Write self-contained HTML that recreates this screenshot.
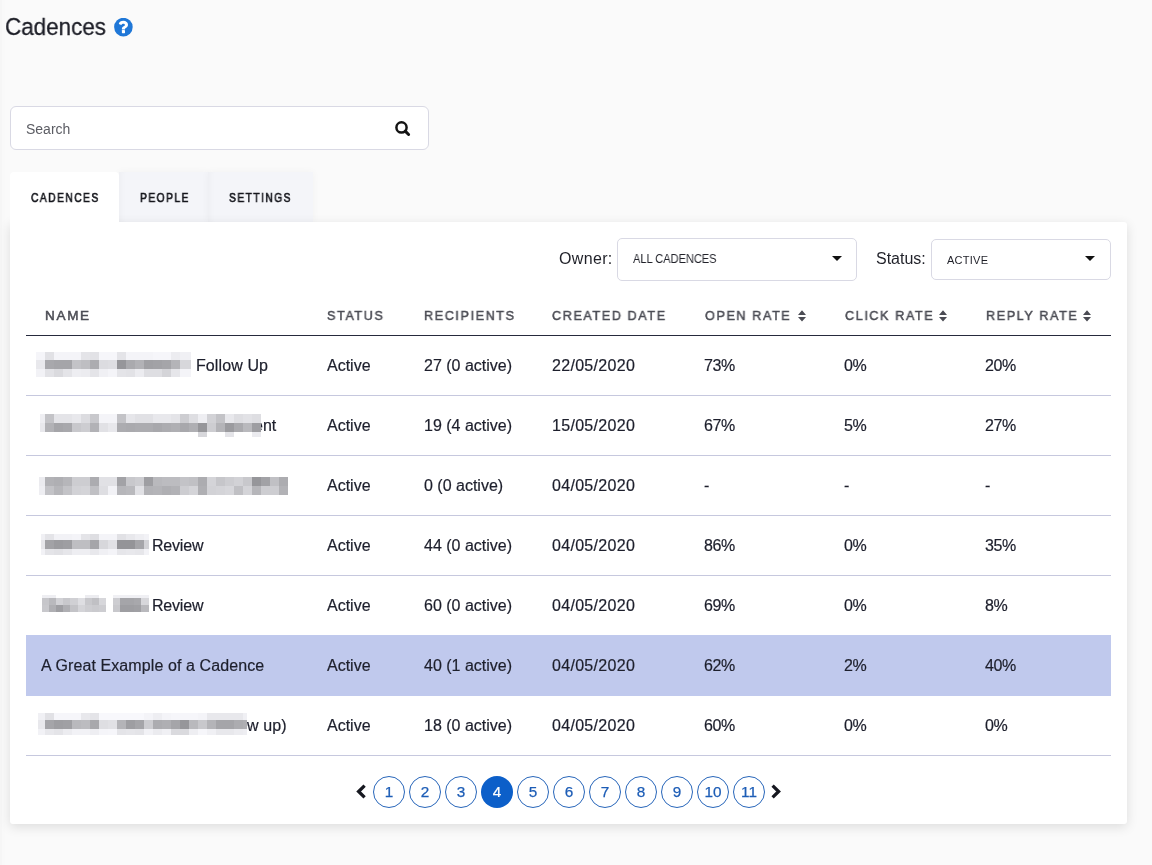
<!DOCTYPE html>
<html><head><meta charset="utf-8"><style>
html,body{margin:0;padding:0}
body{width:1152px;height:865px;background:#fafafa;position:relative;overflow:hidden;font-family:"Liberation Sans",sans-serif}
.t{position:absolute;white-space:nowrap;will-change:transform}
</style></head><body>
<div style="position:absolute;left:0px;top:0px;width:2px;height:865px;background:#f6f6f6"></div>
<div style="position:absolute;left:2px;top:0px;width:3px;height:865px;background:#f9f9f9"></div>
<div class="t" style="left:5px;top:12.83px;font-size:24.5px;line-height:27.37px;color:#1c1d26;font-weight:normal;letter-spacing:0px;transform:scaleX(0.915);transform-origin:0 0;-webkit-text-stroke:0.3px #1c1d26">Cadences</div>
<svg style="position:absolute;left:114px;top:18px" width="19" height="19" viewBox="0 0 19 19"><circle cx="9.4" cy="9.1" r="9.3" fill="#1f77d7"/><path d="M4.8 6.0 C5.2 3.9 7.0 2.8 9.4 2.8 C12.0 2.8 14.0 4.5 14.0 6.7 C14.0 8.5 12.9 9.3 11.9 9.9 C11.2 10.3 11.0 10.6 11.0 11.1 L11.0 11.6 L7.9 11.6 L7.9 10.9 C7.9 9.6 8.6 8.9 9.7 8.3 C10.5 7.8 10.9 7.5 10.9 6.9 C10.9 6.2 10.2 5.7 9.4 5.7 C8.5 5.7 7.8 6.2 7.3 7.0 Z" fill="#fff"/><rect x="7.9" y="12.1" width="3.1" height="3.1" rx="0.4" fill="#fff"/></svg>
<div style="position:absolute;left:10px;top:106px;width:419px;height:44px;box-sizing:border-box;border:1px solid #d9d9e4;border-radius:6px;background:#fff"></div>
<div class="t" style="left:26px;top:122.33px;font-size:14px;line-height:15.64px;color:#5b5c63;font-weight:normal;letter-spacing:0px;">Search</div>
<svg style="position:absolute;left:392px;top:118px" width="22" height="22" viewBox="0 0 22 22"><circle cx="9.5" cy="9.4" r="5.1" fill="none" stroke="#141414" stroke-width="2.5"/><line x1="13.2" y1="13.1" x2="16.6" y2="16.5" stroke="#141414" stroke-width="3" stroke-linecap="round"/></svg>
<div style="position:absolute;left:119px;top:172px;width:89px;height:50px;background:#f4f5f9;box-shadow:0 0 8px rgba(0,0,0,0.04), inset 6px 0 6px -4px rgba(0,0,0,0.03)"></div>
<div style="position:absolute;left:208px;top:172px;width:105px;height:50px;background:#f4f5f9;box-shadow:0 0 8px rgba(0,0,0,0.04), inset 6px 0 6px -4px rgba(0,0,0,0.03)"></div>
<div style="position:absolute;left:10px;top:222px;width:1117px;height:602px;background:#fff;border-radius:0 3px 3px 3px;box-shadow:0 3px 12px rgba(0,0,0,0.12)"></div>
<div style="position:absolute;left:10px;top:172px;width:109px;height:52px;background:#fff;border-radius:4px 4px 0 0"></div>
<div class="t" style="left:30.5px;top:192.34px;font-size:12px;line-height:13.40px;color:#15161c;font-weight:normal;letter-spacing:1.65px;transform:scaleX(0.86);transform-origin:0 0;-webkit-text-stroke:0.6px #15161c">CADENCES</div>
<div class="t" style="left:139.5px;top:192.34px;font-size:12px;line-height:13.40px;color:#15161c;font-weight:normal;letter-spacing:1.65px;transform:scaleX(0.86);transform-origin:0 0;-webkit-text-stroke:0.6px #15161c">PEOPLE</div>
<div class="t" style="left:229px;top:192.34px;font-size:12px;line-height:13.40px;color:#15161c;font-weight:normal;letter-spacing:1.65px;transform:scaleX(0.86);transform-origin:0 0;-webkit-text-stroke:0.6px #15161c">SETTINGS</div>
<div class="t" style="left:558.5px;top:249.82px;font-size:16px;line-height:17.87px;color:#1f2028;font-weight:normal;letter-spacing:0.35px;">Owner:</div>
<div style="position:absolute;left:617px;top:238px;width:240px;height:43px;box-sizing:border-box;border:1px solid #d9d9e4;border-radius:5px;background:#fff"></div>
<div class="t" style="left:632.5px;top:253.28px;font-size:12.4px;line-height:13.85px;color:#1f2028;font-weight:normal;letter-spacing:0px;transform:scaleX(0.89);transform-origin:0 0;">ALL CADENCES</div>
<svg style="position:absolute;left:832px;top:256px" width="10" height="5" viewBox="0 0 10 5"><path d="M0 0 H10 L5 5 Z" fill="#111"/></svg>
<div class="t" style="left:876px;top:249.82px;font-size:16px;line-height:17.87px;color:#1f2028;font-weight:normal;letter-spacing:0px;">Status:</div>
<div style="position:absolute;left:931px;top:239px;width:180px;height:41px;box-sizing:border-box;border:1px solid #d9d9e4;border-radius:5px;background:#fff"></div>
<div class="t" style="left:947px;top:254.04px;font-size:11px;line-height:12.29px;color:#1f2028;font-weight:normal;letter-spacing:0.25px;">ACTIVE</div>
<svg style="position:absolute;left:1085px;top:256px" width="10" height="5" viewBox="0 0 10 5"><path d="M0 0 H10 L5 5 Z" fill="#111"/></svg>
<div class="t" style="left:44.5px;top:308.38px;font-size:13.5px;line-height:15.08px;color:#4b4c54;font-weight:normal;letter-spacing:1.7px;transform:scaleX(0.99);transform-origin:0 0;-webkit-text-stroke:0.5px #4b4c54">NAME</div>
<div class="t" style="left:327px;top:308.38px;font-size:13.5px;line-height:15.08px;color:#4b4c54;font-weight:normal;letter-spacing:1.7px;transform:scaleX(0.935);transform-origin:0 0;-webkit-text-stroke:0.5px #4b4c54">STATUS</div>
<div class="t" style="left:423.5px;top:308.38px;font-size:13.5px;line-height:15.08px;color:#4b4c54;font-weight:normal;letter-spacing:1.7px;transform:scaleX(0.935);transform-origin:0 0;-webkit-text-stroke:0.5px #4b4c54">RECIPIENTS</div>
<div class="t" style="left:551.5px;top:308.38px;font-size:13.5px;line-height:15.08px;color:#4b4c54;font-weight:normal;letter-spacing:1.7px;transform:scaleX(0.935);transform-origin:0 0;-webkit-text-stroke:0.5px #4b4c54">CREATED DATE</div>
<div class="t" style="left:704.5px;top:308.38px;font-size:13.5px;line-height:15.08px;color:#4b4c54;font-weight:normal;letter-spacing:1.7px;transform:scaleX(0.935);transform-origin:0 0;-webkit-text-stroke:0.5px #4b4c54">OPEN RATE</div>
<div class="t" style="left:845px;top:308.38px;font-size:13.5px;line-height:15.08px;color:#4b4c54;font-weight:normal;letter-spacing:1.7px;transform:scaleX(0.935);transform-origin:0 0;-webkit-text-stroke:0.5px #4b4c54">CLICK RATE</div>
<div class="t" style="left:985.5px;top:308.38px;font-size:13.5px;line-height:15.08px;color:#4b4c54;font-weight:normal;letter-spacing:1.7px;transform:scaleX(0.935);transform-origin:0 0;-webkit-text-stroke:0.5px #4b4c54">REPLY RATE</div>
<svg style="position:absolute;left:798px;top:310px" width="8" height="12" viewBox="0 0 8 12"><path d="M0 5 L4 0.3 L8 5 Z M0 7 L8 7 L4 11.5 Z" fill="#4b4c54"/></svg>
<svg style="position:absolute;left:939.3px;top:310px" width="8" height="12" viewBox="0 0 8 12"><path d="M0 5 L4 0.3 L8 5 Z M0 7 L8 7 L4 11.5 Z" fill="#4b4c54"/></svg>
<svg style="position:absolute;left:1082.7px;top:310px" width="8" height="12" viewBox="0 0 8 12"><path d="M0 5 L4 0.3 L8 5 Z M0 7 L8 7 L4 11.5 Z" fill="#4b4c54"/></svg>
<div style="position:absolute;left:26px;top:335px;width:1085px;height:1px;background:#262a3d"></div>
<div class="t" style="left:195.7px;top:356.52px;font-size:16px;line-height:17.87px;color:#1d1f2c;font-weight:normal;letter-spacing:0.1px;-webkit-text-stroke:0.2px #1d1f2c">Follow Up</div>
<div class="t" style="left:327px;top:356.52px;font-size:16px;line-height:17.87px;color:#1d1f2c;font-weight:normal;letter-spacing:0px;-webkit-text-stroke:0.2px #1d1f2c">Active</div>
<div class="t" style="left:423.5px;top:356.52px;font-size:16px;line-height:17.87px;color:#1d1f2c;font-weight:normal;letter-spacing:0px;-webkit-text-stroke:0.2px #1d1f2c">27 (0 active)</div>
<div class="t" style="left:551.5px;top:356.52px;font-size:16px;line-height:17.87px;color:#1d1f2c;font-weight:normal;letter-spacing:0.3px;-webkit-text-stroke:0.2px #1d1f2c">22/05/2020</div>
<div class="t" style="left:703.7px;top:356.52px;font-size:16px;line-height:17.87px;color:#1d1f2c;font-weight:normal;letter-spacing:-0.4px;-webkit-text-stroke:0.2px #1d1f2c">73%</div>
<div class="t" style="left:844px;top:356.52px;font-size:16px;line-height:17.87px;color:#1d1f2c;font-weight:normal;letter-spacing:-0.4px;-webkit-text-stroke:0.2px #1d1f2c">0%</div>
<div class="t" style="left:984.7px;top:356.52px;font-size:16px;line-height:17.87px;color:#1d1f2c;font-weight:normal;letter-spacing:-0.4px;-webkit-text-stroke:0.2px #1d1f2c">20%</div>
<div style="position:absolute;left:26px;top:395px;width:1085px;height:1px;background:#c6c8de"></div>
<div class="t" style="left:254px;top:416.52px;font-size:16px;line-height:17.87px;color:#1d1f2c;font-weight:normal;letter-spacing:0px;-webkit-text-stroke:0.2px #1d1f2c">ent</div>
<div class="t" style="left:327px;top:416.52px;font-size:16px;line-height:17.87px;color:#1d1f2c;font-weight:normal;letter-spacing:0px;-webkit-text-stroke:0.2px #1d1f2c">Active</div>
<div class="t" style="left:423.5px;top:416.52px;font-size:16px;line-height:17.87px;color:#1d1f2c;font-weight:normal;letter-spacing:0px;-webkit-text-stroke:0.2px #1d1f2c">19 (4 active)</div>
<div class="t" style="left:551.5px;top:416.52px;font-size:16px;line-height:17.87px;color:#1d1f2c;font-weight:normal;letter-spacing:0.3px;-webkit-text-stroke:0.2px #1d1f2c">15/05/2020</div>
<div class="t" style="left:703.7px;top:416.52px;font-size:16px;line-height:17.87px;color:#1d1f2c;font-weight:normal;letter-spacing:-0.4px;-webkit-text-stroke:0.2px #1d1f2c">67%</div>
<div class="t" style="left:844px;top:416.52px;font-size:16px;line-height:17.87px;color:#1d1f2c;font-weight:normal;letter-spacing:-0.4px;-webkit-text-stroke:0.2px #1d1f2c">5%</div>
<div class="t" style="left:984.7px;top:416.52px;font-size:16px;line-height:17.87px;color:#1d1f2c;font-weight:normal;letter-spacing:-0.4px;-webkit-text-stroke:0.2px #1d1f2c">27%</div>
<div style="position:absolute;left:26px;top:455px;width:1085px;height:1px;background:#c6c8de"></div>
<div class="t" style="left:327px;top:476.52px;font-size:16px;line-height:17.87px;color:#1d1f2c;font-weight:normal;letter-spacing:0px;-webkit-text-stroke:0.2px #1d1f2c">Active</div>
<div class="t" style="left:423.5px;top:476.52px;font-size:16px;line-height:17.87px;color:#1d1f2c;font-weight:normal;letter-spacing:0px;-webkit-text-stroke:0.2px #1d1f2c">0 (0 active)</div>
<div class="t" style="left:551.5px;top:476.52px;font-size:16px;line-height:17.87px;color:#1d1f2c;font-weight:normal;letter-spacing:0.3px;-webkit-text-stroke:0.2px #1d1f2c">04/05/2020</div>
<div class="t" style="left:703.7px;top:476.52px;font-size:16px;line-height:17.87px;color:#1d1f2c;font-weight:normal;letter-spacing:-0.4px;-webkit-text-stroke:0.2px #1d1f2c">-</div>
<div class="t" style="left:844px;top:476.52px;font-size:16px;line-height:17.87px;color:#1d1f2c;font-weight:normal;letter-spacing:-0.4px;-webkit-text-stroke:0.2px #1d1f2c">-</div>
<div class="t" style="left:984.7px;top:476.52px;font-size:16px;line-height:17.87px;color:#1d1f2c;font-weight:normal;letter-spacing:-0.4px;-webkit-text-stroke:0.2px #1d1f2c">-</div>
<div style="position:absolute;left:26px;top:515px;width:1085px;height:1px;background:#c6c8de"></div>
<div class="t" style="left:152.3px;top:536.52px;font-size:16px;line-height:17.87px;color:#1d1f2c;font-weight:normal;letter-spacing:-0.2px;-webkit-text-stroke:0.2px #1d1f2c">Review</div>
<div class="t" style="left:327px;top:536.52px;font-size:16px;line-height:17.87px;color:#1d1f2c;font-weight:normal;letter-spacing:0px;-webkit-text-stroke:0.2px #1d1f2c">Active</div>
<div class="t" style="left:423.5px;top:536.52px;font-size:16px;line-height:17.87px;color:#1d1f2c;font-weight:normal;letter-spacing:0px;-webkit-text-stroke:0.2px #1d1f2c">44 (0 active)</div>
<div class="t" style="left:551.5px;top:536.52px;font-size:16px;line-height:17.87px;color:#1d1f2c;font-weight:normal;letter-spacing:0.3px;-webkit-text-stroke:0.2px #1d1f2c">04/05/2020</div>
<div class="t" style="left:703.7px;top:536.52px;font-size:16px;line-height:17.87px;color:#1d1f2c;font-weight:normal;letter-spacing:-0.4px;-webkit-text-stroke:0.2px #1d1f2c">86%</div>
<div class="t" style="left:844px;top:536.52px;font-size:16px;line-height:17.87px;color:#1d1f2c;font-weight:normal;letter-spacing:-0.4px;-webkit-text-stroke:0.2px #1d1f2c">0%</div>
<div class="t" style="left:984.7px;top:536.52px;font-size:16px;line-height:17.87px;color:#1d1f2c;font-weight:normal;letter-spacing:-0.4px;-webkit-text-stroke:0.2px #1d1f2c">35%</div>
<div style="position:absolute;left:26px;top:575px;width:1085px;height:1px;background:#c6c8de"></div>
<div class="t" style="left:152.3px;top:596.52px;font-size:16px;line-height:17.87px;color:#1d1f2c;font-weight:normal;letter-spacing:-0.2px;-webkit-text-stroke:0.2px #1d1f2c">Review</div>
<div class="t" style="left:327px;top:596.52px;font-size:16px;line-height:17.87px;color:#1d1f2c;font-weight:normal;letter-spacing:0px;-webkit-text-stroke:0.2px #1d1f2c">Active</div>
<div class="t" style="left:423.5px;top:596.52px;font-size:16px;line-height:17.87px;color:#1d1f2c;font-weight:normal;letter-spacing:0px;-webkit-text-stroke:0.2px #1d1f2c">60 (0 active)</div>
<div class="t" style="left:551.5px;top:596.52px;font-size:16px;line-height:17.87px;color:#1d1f2c;font-weight:normal;letter-spacing:0.3px;-webkit-text-stroke:0.2px #1d1f2c">04/05/2020</div>
<div class="t" style="left:703.7px;top:596.52px;font-size:16px;line-height:17.87px;color:#1d1f2c;font-weight:normal;letter-spacing:-0.4px;-webkit-text-stroke:0.2px #1d1f2c">69%</div>
<div class="t" style="left:844px;top:596.52px;font-size:16px;line-height:17.87px;color:#1d1f2c;font-weight:normal;letter-spacing:-0.4px;-webkit-text-stroke:0.2px #1d1f2c">0%</div>
<div class="t" style="left:984.7px;top:596.52px;font-size:16px;line-height:17.87px;color:#1d1f2c;font-weight:normal;letter-spacing:-0.4px;-webkit-text-stroke:0.2px #1d1f2c">8%</div>
<div style="position:absolute;left:26px;top:635px;width:1085px;height:61px;background:#c0c9ed"></div>
<div class="t" style="left:41px;top:656.52px;font-size:16px;line-height:17.87px;color:#1d1f2c;font-weight:normal;letter-spacing:0.1px;-webkit-text-stroke:0.2px #1d1f2c">A Great Example of a Cadence</div>
<div class="t" style="left:327px;top:656.52px;font-size:16px;line-height:17.87px;color:#1d1f2c;font-weight:normal;letter-spacing:0px;-webkit-text-stroke:0.2px #1d1f2c">Active</div>
<div class="t" style="left:423.5px;top:656.52px;font-size:16px;line-height:17.87px;color:#1d1f2c;font-weight:normal;letter-spacing:0px;-webkit-text-stroke:0.2px #1d1f2c">40 (1 active)</div>
<div class="t" style="left:551.5px;top:656.52px;font-size:16px;line-height:17.87px;color:#1d1f2c;font-weight:normal;letter-spacing:0.3px;-webkit-text-stroke:0.2px #1d1f2c">04/05/2020</div>
<div class="t" style="left:703.7px;top:656.52px;font-size:16px;line-height:17.87px;color:#1d1f2c;font-weight:normal;letter-spacing:-0.4px;-webkit-text-stroke:0.2px #1d1f2c">62%</div>
<div class="t" style="left:844px;top:656.52px;font-size:16px;line-height:17.87px;color:#1d1f2c;font-weight:normal;letter-spacing:-0.4px;-webkit-text-stroke:0.2px #1d1f2c">2%</div>
<div class="t" style="left:984.7px;top:656.52px;font-size:16px;line-height:17.87px;color:#1d1f2c;font-weight:normal;letter-spacing:-0.4px;-webkit-text-stroke:0.2px #1d1f2c">40%</div>
<div class="t" style="left:247px;top:716.52px;font-size:16px;line-height:17.87px;color:#1d1f2c;font-weight:normal;letter-spacing:0.1px;-webkit-text-stroke:0.2px #1d1f2c">w up)</div>
<div class="t" style="left:327px;top:716.52px;font-size:16px;line-height:17.87px;color:#1d1f2c;font-weight:normal;letter-spacing:0px;-webkit-text-stroke:0.2px #1d1f2c">Active</div>
<div class="t" style="left:423.5px;top:716.52px;font-size:16px;line-height:17.87px;color:#1d1f2c;font-weight:normal;letter-spacing:0px;-webkit-text-stroke:0.2px #1d1f2c">18 (0 active)</div>
<div class="t" style="left:551.5px;top:716.52px;font-size:16px;line-height:17.87px;color:#1d1f2c;font-weight:normal;letter-spacing:0.3px;-webkit-text-stroke:0.2px #1d1f2c">04/05/2020</div>
<div class="t" style="left:703.7px;top:716.52px;font-size:16px;line-height:17.87px;color:#1d1f2c;font-weight:normal;letter-spacing:-0.4px;-webkit-text-stroke:0.2px #1d1f2c">60%</div>
<div class="t" style="left:844px;top:716.52px;font-size:16px;line-height:17.87px;color:#1d1f2c;font-weight:normal;letter-spacing:-0.4px;-webkit-text-stroke:0.2px #1d1f2c">0%</div>
<div class="t" style="left:984.7px;top:716.52px;font-size:16px;line-height:17.87px;color:#1d1f2c;font-weight:normal;letter-spacing:-0.4px;-webkit-text-stroke:0.2px #1d1f2c">0%</div>
<div style="position:absolute;left:26px;top:755px;width:1085px;height:1px;background:#c6c8de"></div>
<div style="position:absolute;left:26px;top:755px;width:1085px;height:1px;background:#c6c8de"></div>
<div style="position:absolute;left:36px;top:352px;width:9px;height:8px;background:rgb(245,245,249)"></div>
<div style="position:absolute;left:45px;top:352px;width:9px;height:8px;background:rgb(225,225,229)"></div>
<div style="position:absolute;left:54px;top:352px;width:9px;height:8px;background:rgb(244,244,248)"></div>
<div style="position:absolute;left:63px;top:352px;width:9px;height:8px;background:rgb(244,244,248)"></div>
<div style="position:absolute;left:72px;top:352px;width:9px;height:8px;background:rgb(244,244,248)"></div>
<div style="position:absolute;left:81px;top:352px;width:9px;height:8px;background:rgb(228,228,232)"></div>
<div style="position:absolute;left:90px;top:352px;width:9px;height:8px;background:rgb(226,226,230)"></div>
<div style="position:absolute;left:99px;top:352px;width:9px;height:8px;background:rgb(246,246,250)"></div>
<div style="position:absolute;left:108px;top:352px;width:9px;height:8px;background:rgb(246,246,250)"></div>
<div style="position:absolute;left:117px;top:352px;width:9px;height:8px;background:rgb(228,228,232)"></div>
<div style="position:absolute;left:126px;top:352px;width:9px;height:8px;background:rgb(244,244,248)"></div>
<div style="position:absolute;left:135px;top:352px;width:9px;height:8px;background:rgb(244,244,248)"></div>
<div style="position:absolute;left:144px;top:352px;width:9px;height:8px;background:rgb(244,244,248)"></div>
<div style="position:absolute;left:153px;top:352px;width:9px;height:8px;background:rgb(246,246,250)"></div>
<div style="position:absolute;left:162px;top:352px;width:9px;height:8px;background:rgb(246,246,250)"></div>
<div style="position:absolute;left:171px;top:352px;width:9px;height:8px;background:rgb(236,236,240)"></div>
<div style="position:absolute;left:180px;top:352px;width:11px;height:8px;background:rgb(240,240,244)"></div>
<div style="position:absolute;left:36px;top:360px;width:9px;height:9px;background:rgb(232,232,236)"></div>
<div style="position:absolute;left:45px;top:360px;width:9px;height:9px;background:rgb(168,168,172)"></div>
<div style="position:absolute;left:54px;top:360px;width:9px;height:9px;background:rgb(165,165,169)"></div>
<div style="position:absolute;left:63px;top:360px;width:9px;height:9px;background:rgb(165,165,169)"></div>
<div style="position:absolute;left:72px;top:360px;width:9px;height:9px;background:rgb(195,195,199)"></div>
<div style="position:absolute;left:81px;top:360px;width:9px;height:9px;background:rgb(190,190,194)"></div>
<div style="position:absolute;left:90px;top:360px;width:9px;height:9px;background:rgb(172,172,176)"></div>
<div style="position:absolute;left:99px;top:360px;width:9px;height:9px;background:rgb(220,220,224)"></div>
<div style="position:absolute;left:108px;top:360px;width:9px;height:9px;background:rgb(222,222,226)"></div>
<div style="position:absolute;left:117px;top:360px;width:9px;height:9px;background:rgb(150,150,154)"></div>
<div style="position:absolute;left:126px;top:360px;width:9px;height:9px;background:rgb(170,170,174)"></div>
<div style="position:absolute;left:135px;top:360px;width:9px;height:9px;background:rgb(178,178,182)"></div>
<div style="position:absolute;left:144px;top:360px;width:9px;height:9px;background:rgb(160,160,164)"></div>
<div style="position:absolute;left:153px;top:360px;width:9px;height:9px;background:rgb(162,162,166)"></div>
<div style="position:absolute;left:162px;top:360px;width:9px;height:9px;background:rgb(165,165,169)"></div>
<div style="position:absolute;left:171px;top:360px;width:9px;height:9px;background:rgb(180,180,184)"></div>
<div style="position:absolute;left:180px;top:360px;width:11px;height:9px;background:rgb(215,215,219)"></div>
<div style="position:absolute;left:36px;top:369px;width:9px;height:8px;background:rgb(242,242,246)"></div>
<div style="position:absolute;left:45px;top:369px;width:9px;height:8px;background:rgb(226,226,230)"></div>
<div style="position:absolute;left:54px;top:369px;width:9px;height:8px;background:rgb(218,218,222)"></div>
<div style="position:absolute;left:63px;top:369px;width:9px;height:8px;background:rgb(228,228,232)"></div>
<div style="position:absolute;left:72px;top:369px;width:9px;height:8px;background:rgb(238,238,242)"></div>
<div style="position:absolute;left:81px;top:369px;width:9px;height:8px;background:rgb(236,236,240)"></div>
<div style="position:absolute;left:90px;top:369px;width:9px;height:8px;background:rgb(228,228,232)"></div>
<div style="position:absolute;left:99px;top:369px;width:9px;height:8px;background:rgb(240,240,244)"></div>
<div style="position:absolute;left:108px;top:369px;width:9px;height:8px;background:rgb(244,244,248)"></div>
<div style="position:absolute;left:117px;top:369px;width:9px;height:8px;background:rgb(228,228,232)"></div>
<div style="position:absolute;left:126px;top:369px;width:9px;height:8px;background:rgb(226,226,230)"></div>
<div style="position:absolute;left:135px;top:369px;width:9px;height:8px;background:rgb(236,236,240)"></div>
<div style="position:absolute;left:144px;top:369px;width:9px;height:8px;background:rgb(222,222,226)"></div>
<div style="position:absolute;left:153px;top:369px;width:9px;height:8px;background:rgb(222,222,226)"></div>
<div style="position:absolute;left:162px;top:369px;width:9px;height:8px;background:rgb(212,212,216)"></div>
<div style="position:absolute;left:171px;top:369px;width:9px;height:8px;background:rgb(230,230,234)"></div>
<div style="position:absolute;left:180px;top:369px;width:11px;height:8px;background:rgb(244,244,248)"></div>
<div style="position:absolute;left:40px;top:414px;width:5px;height:9px;background:rgb(238,238,242)"></div>
<div style="position:absolute;left:45px;top:414px;width:9px;height:9px;background:rgb(195,195,199)"></div>
<div style="position:absolute;left:54px;top:414px;width:9px;height:9px;background:rgb(228,228,232)"></div>
<div style="position:absolute;left:63px;top:414px;width:9px;height:9px;background:rgb(228,228,232)"></div>
<div style="position:absolute;left:72px;top:414px;width:9px;height:9px;background:rgb(232,232,236)"></div>
<div style="position:absolute;left:81px;top:414px;width:9px;height:9px;background:rgb(220,220,224)"></div>
<div style="position:absolute;left:90px;top:414px;width:9px;height:9px;background:rgb(200,200,204)"></div>
<div style="position:absolute;left:99px;top:414px;width:9px;height:9px;background:rgb(244,244,248)"></div>
<div style="position:absolute;left:108px;top:414px;width:9px;height:9px;background:rgb(244,244,248)"></div>
<div style="position:absolute;left:117px;top:414px;width:9px;height:9px;background:rgb(195,195,199)"></div>
<div style="position:absolute;left:126px;top:414px;width:9px;height:9px;background:rgb(230,230,234)"></div>
<div style="position:absolute;left:135px;top:414px;width:9px;height:9px;background:rgb(225,225,229)"></div>
<div style="position:absolute;left:144px;top:414px;width:9px;height:9px;background:rgb(225,225,229)"></div>
<div style="position:absolute;left:153px;top:414px;width:9px;height:9px;background:rgb(232,232,236)"></div>
<div style="position:absolute;left:162px;top:414px;width:9px;height:9px;background:rgb(232,232,236)"></div>
<div style="position:absolute;left:171px;top:414px;width:9px;height:9px;background:rgb(228,228,232)"></div>
<div style="position:absolute;left:180px;top:414px;width:9px;height:9px;background:rgb(205,205,209)"></div>
<div style="position:absolute;left:189px;top:414px;width:9px;height:9px;background:rgb(222,222,226)"></div>
<div style="position:absolute;left:198px;top:414px;width:9px;height:9px;background:rgb(238,238,242)"></div>
<div style="position:absolute;left:207px;top:414px;width:9px;height:9px;background:rgb(210,210,214)"></div>
<div style="position:absolute;left:216px;top:414px;width:9px;height:9px;background:rgb(195,195,199)"></div>
<div style="position:absolute;left:225px;top:414px;width:9px;height:9px;background:rgb(232,232,236)"></div>
<div style="position:absolute;left:234px;top:414px;width:9px;height:9px;background:rgb(222,222,226)"></div>
<div style="position:absolute;left:243px;top:414px;width:9px;height:9px;background:rgb(226,226,230)"></div>
<div style="position:absolute;left:252px;top:414px;width:9px;height:9px;background:rgb(222,222,226)"></div>
<div style="position:absolute;left:40px;top:423px;width:5px;height:9px;background:rgb(232,232,236)"></div>
<div style="position:absolute;left:45px;top:423px;width:9px;height:9px;background:rgb(178,178,182)"></div>
<div style="position:absolute;left:54px;top:423px;width:9px;height:9px;background:rgb(165,165,169)"></div>
<div style="position:absolute;left:63px;top:423px;width:9px;height:9px;background:rgb(168,168,172)"></div>
<div style="position:absolute;left:72px;top:423px;width:9px;height:9px;background:rgb(200,200,204)"></div>
<div style="position:absolute;left:81px;top:423px;width:9px;height:9px;background:rgb(205,205,209)"></div>
<div style="position:absolute;left:90px;top:423px;width:9px;height:9px;background:rgb(178,178,182)"></div>
<div style="position:absolute;left:99px;top:423px;width:9px;height:9px;background:rgb(225,225,229)"></div>
<div style="position:absolute;left:108px;top:423px;width:9px;height:9px;background:rgb(232,232,236)"></div>
<div style="position:absolute;left:117px;top:423px;width:9px;height:9px;background:rgb(172,172,176)"></div>
<div style="position:absolute;left:126px;top:423px;width:9px;height:9px;background:rgb(170,170,174)"></div>
<div style="position:absolute;left:135px;top:423px;width:9px;height:9px;background:rgb(172,172,176)"></div>
<div style="position:absolute;left:144px;top:423px;width:9px;height:9px;background:rgb(172,172,176)"></div>
<div style="position:absolute;left:153px;top:423px;width:9px;height:9px;background:rgb(168,168,172)"></div>
<div style="position:absolute;left:162px;top:423px;width:9px;height:9px;background:rgb(172,172,176)"></div>
<div style="position:absolute;left:171px;top:423px;width:9px;height:9px;background:rgb(175,175,179)"></div>
<div style="position:absolute;left:180px;top:423px;width:9px;height:9px;background:rgb(168,168,172)"></div>
<div style="position:absolute;left:189px;top:423px;width:9px;height:9px;background:rgb(175,175,179)"></div>
<div style="position:absolute;left:198px;top:423px;width:9px;height:9px;background:rgb(150,150,154)"></div>
<div style="position:absolute;left:207px;top:423px;width:9px;height:9px;background:rgb(205,205,209)"></div>
<div style="position:absolute;left:216px;top:423px;width:9px;height:9px;background:rgb(180,180,184)"></div>
<div style="position:absolute;left:225px;top:423px;width:9px;height:9px;background:rgb(155,155,159)"></div>
<div style="position:absolute;left:234px;top:423px;width:9px;height:9px;background:rgb(170,170,174)"></div>
<div style="position:absolute;left:243px;top:423px;width:9px;height:9px;background:rgb(185,185,189)"></div>
<div style="position:absolute;left:252px;top:423px;width:9px;height:9px;background:rgb(158,158,162)"></div>
<div style="position:absolute;left:198px;top:432px;width:9px;height:5px;background:rgb(215,215,219)"></div>
<div style="position:absolute;left:225px;top:432px;width:9px;height:5px;background:rgb(228,228,232)"></div>
<div style="position:absolute;left:252px;top:432px;width:9px;height:5px;background:rgb(235,235,239)"></div>
<div style="position:absolute;left:39px;top:477px;width:6px;height:9px;background:rgb(235,235,239)"></div>
<div style="position:absolute;left:45px;top:477px;width:9px;height:9px;background:rgb(178,178,182)"></div>
<div style="position:absolute;left:54px;top:477px;width:9px;height:9px;background:rgb(175,175,179)"></div>
<div style="position:absolute;left:63px;top:477px;width:9px;height:9px;background:rgb(182,182,186)"></div>
<div style="position:absolute;left:72px;top:477px;width:9px;height:9px;background:rgb(205,205,209)"></div>
<div style="position:absolute;left:81px;top:477px;width:9px;height:9px;background:rgb(205,205,209)"></div>
<div style="position:absolute;left:90px;top:477px;width:9px;height:9px;background:rgb(172,172,176)"></div>
<div style="position:absolute;left:99px;top:477px;width:9px;height:9px;background:rgb(225,225,229)"></div>
<div style="position:absolute;left:108px;top:477px;width:9px;height:9px;background:rgb(225,225,229)"></div>
<div style="position:absolute;left:117px;top:477px;width:9px;height:9px;background:rgb(162,162,166)"></div>
<div style="position:absolute;left:126px;top:477px;width:9px;height:9px;background:rgb(200,200,204)"></div>
<div style="position:absolute;left:135px;top:477px;width:9px;height:9px;background:rgb(205,205,209)"></div>
<div style="position:absolute;left:144px;top:477px;width:9px;height:9px;background:rgb(158,158,162)"></div>
<div style="position:absolute;left:153px;top:477px;width:9px;height:9px;background:rgb(185,185,189)"></div>
<div style="position:absolute;left:162px;top:477px;width:9px;height:9px;background:rgb(188,188,192)"></div>
<div style="position:absolute;left:171px;top:477px;width:9px;height:9px;background:rgb(188,188,192)"></div>
<div style="position:absolute;left:180px;top:477px;width:9px;height:9px;background:rgb(195,195,199)"></div>
<div style="position:absolute;left:189px;top:477px;width:9px;height:9px;background:rgb(192,192,196)"></div>
<div style="position:absolute;left:198px;top:477px;width:9px;height:9px;background:rgb(172,172,176)"></div>
<div style="position:absolute;left:207px;top:477px;width:9px;height:9px;background:rgb(212,212,216)"></div>
<div style="position:absolute;left:216px;top:477px;width:9px;height:9px;background:rgb(198,198,202)"></div>
<div style="position:absolute;left:225px;top:477px;width:9px;height:9px;background:rgb(205,205,209)"></div>
<div style="position:absolute;left:234px;top:477px;width:9px;height:9px;background:rgb(210,210,214)"></div>
<div style="position:absolute;left:243px;top:477px;width:9px;height:9px;background:rgb(200,200,204)"></div>
<div style="position:absolute;left:252px;top:477px;width:9px;height:9px;background:rgb(150,150,154)"></div>
<div style="position:absolute;left:261px;top:477px;width:9px;height:9px;background:rgb(162,162,166)"></div>
<div style="position:absolute;left:270px;top:477px;width:9px;height:9px;background:rgb(192,192,196)"></div>
<div style="position:absolute;left:279px;top:477px;width:9px;height:9px;background:rgb(172,172,176)"></div>
<div style="position:absolute;left:39px;top:486px;width:6px;height:9px;background:rgb(238,238,242)"></div>
<div style="position:absolute;left:45px;top:486px;width:9px;height:9px;background:rgb(195,195,199)"></div>
<div style="position:absolute;left:54px;top:486px;width:9px;height:9px;background:rgb(182,182,186)"></div>
<div style="position:absolute;left:63px;top:486px;width:9px;height:9px;background:rgb(195,195,199)"></div>
<div style="position:absolute;left:72px;top:486px;width:9px;height:9px;background:rgb(210,210,214)"></div>
<div style="position:absolute;left:81px;top:486px;width:9px;height:9px;background:rgb(212,212,216)"></div>
<div style="position:absolute;left:90px;top:486px;width:9px;height:9px;background:rgb(192,192,196)"></div>
<div style="position:absolute;left:99px;top:486px;width:9px;height:9px;background:rgb(222,222,226)"></div>
<div style="position:absolute;left:108px;top:486px;width:9px;height:9px;background:rgb(242,242,246)"></div>
<div style="position:absolute;left:117px;top:486px;width:9px;height:9px;background:rgb(182,182,186)"></div>
<div style="position:absolute;left:126px;top:486px;width:9px;height:9px;background:rgb(185,185,189)"></div>
<div style="position:absolute;left:135px;top:486px;width:9px;height:9px;background:rgb(225,225,229)"></div>
<div style="position:absolute;left:144px;top:486px;width:9px;height:9px;background:rgb(178,178,182)"></div>
<div style="position:absolute;left:153px;top:486px;width:9px;height:9px;background:rgb(180,180,184)"></div>
<div style="position:absolute;left:162px;top:486px;width:9px;height:9px;background:rgb(175,175,179)"></div>
<div style="position:absolute;left:171px;top:486px;width:9px;height:9px;background:rgb(178,178,182)"></div>
<div style="position:absolute;left:180px;top:486px;width:9px;height:9px;background:rgb(205,205,209)"></div>
<div style="position:absolute;left:189px;top:486px;width:9px;height:9px;background:rgb(212,212,216)"></div>
<div style="position:absolute;left:198px;top:486px;width:9px;height:9px;background:rgb(175,175,179)"></div>
<div style="position:absolute;left:207px;top:486px;width:9px;height:9px;background:rgb(210,210,214)"></div>
<div style="position:absolute;left:216px;top:486px;width:9px;height:9px;background:rgb(212,212,216)"></div>
<div style="position:absolute;left:225px;top:486px;width:9px;height:9px;background:rgb(215,215,219)"></div>
<div style="position:absolute;left:234px;top:486px;width:9px;height:9px;background:rgb(192,192,196)"></div>
<div style="position:absolute;left:243px;top:486px;width:9px;height:9px;background:rgb(212,212,216)"></div>
<div style="position:absolute;left:252px;top:486px;width:9px;height:9px;background:rgb(182,182,186)"></div>
<div style="position:absolute;left:261px;top:486px;width:9px;height:9px;background:rgb(205,205,209)"></div>
<div style="position:absolute;left:270px;top:486px;width:9px;height:9px;background:rgb(205,205,209)"></div>
<div style="position:absolute;left:279px;top:486px;width:9px;height:9px;background:rgb(178,178,182)"></div>
<div style="position:absolute;left:41px;top:534px;width:4px;height:6px;background:rgb(240,240,244)"></div>
<div style="position:absolute;left:45px;top:534px;width:9px;height:6px;background:rgb(228,228,232)"></div>
<div style="position:absolute;left:54px;top:534px;width:9px;height:6px;background:rgb(242,242,246)"></div>
<div style="position:absolute;left:63px;top:534px;width:9px;height:6px;background:rgb(242,242,246)"></div>
<div style="position:absolute;left:72px;top:534px;width:9px;height:6px;background:rgb(244,244,248)"></div>
<div style="position:absolute;left:81px;top:534px;width:9px;height:6px;background:rgb(228,228,232)"></div>
<div style="position:absolute;left:90px;top:534px;width:9px;height:6px;background:rgb(222,222,226)"></div>
<div style="position:absolute;left:99px;top:534px;width:9px;height:6px;background:rgb(244,244,248)"></div>
<div style="position:absolute;left:108px;top:534px;width:9px;height:6px;background:rgb(244,244,248)"></div>
<div style="position:absolute;left:117px;top:534px;width:9px;height:6px;background:rgb(225,225,229)"></div>
<div style="position:absolute;left:126px;top:534px;width:9px;height:6px;background:rgb(232,232,236)"></div>
<div style="position:absolute;left:135px;top:534px;width:9px;height:6px;background:rgb(238,238,242)"></div>
<div style="position:absolute;left:144px;top:534px;width:5px;height:6px;background:rgb(242,242,246)"></div>
<div style="position:absolute;left:41px;top:540px;width:4px;height:9px;background:rgb(230,230,234)"></div>
<div style="position:absolute;left:45px;top:540px;width:9px;height:9px;background:rgb(162,162,166)"></div>
<div style="position:absolute;left:54px;top:540px;width:9px;height:9px;background:rgb(155,155,159)"></div>
<div style="position:absolute;left:63px;top:540px;width:9px;height:9px;background:rgb(158,158,162)"></div>
<div style="position:absolute;left:72px;top:540px;width:9px;height:9px;background:rgb(190,190,194)"></div>
<div style="position:absolute;left:81px;top:540px;width:9px;height:9px;background:rgb(190,190,194)"></div>
<div style="position:absolute;left:90px;top:540px;width:9px;height:9px;background:rgb(165,165,169)"></div>
<div style="position:absolute;left:99px;top:540px;width:9px;height:9px;background:rgb(215,215,219)"></div>
<div style="position:absolute;left:108px;top:540px;width:9px;height:9px;background:rgb(225,225,229)"></div>
<div style="position:absolute;left:117px;top:540px;width:9px;height:9px;background:rgb(148,148,152)"></div>
<div style="position:absolute;left:126px;top:540px;width:9px;height:9px;background:rgb(148,148,152)"></div>
<div style="position:absolute;left:135px;top:540px;width:9px;height:9px;background:rgb(165,165,169)"></div>
<div style="position:absolute;left:144px;top:540px;width:5px;height:9px;background:rgb(210,210,214)"></div>
<div style="position:absolute;left:41px;top:549px;width:4px;height:6px;background:rgb(242,242,246)"></div>
<div style="position:absolute;left:45px;top:549px;width:9px;height:6px;background:rgb(228,228,232)"></div>
<div style="position:absolute;left:54px;top:549px;width:9px;height:6px;background:rgb(225,225,229)"></div>
<div style="position:absolute;left:63px;top:549px;width:9px;height:6px;background:rgb(230,230,234)"></div>
<div style="position:absolute;left:72px;top:549px;width:9px;height:6px;background:rgb(238,238,242)"></div>
<div style="position:absolute;left:81px;top:549px;width:9px;height:6px;background:rgb(238,238,242)"></div>
<div style="position:absolute;left:90px;top:549px;width:9px;height:6px;background:rgb(232,232,236)"></div>
<div style="position:absolute;left:99px;top:549px;width:9px;height:6px;background:rgb(240,240,244)"></div>
<div style="position:absolute;left:108px;top:549px;width:9px;height:6px;background:rgb(244,244,248)"></div>
<div style="position:absolute;left:117px;top:549px;width:9px;height:6px;background:rgb(230,230,234)"></div>
<div style="position:absolute;left:126px;top:549px;width:9px;height:6px;background:rgb(232,232,236)"></div>
<div style="position:absolute;left:135px;top:549px;width:9px;height:6px;background:rgb(230,230,234)"></div>
<div style="position:absolute;left:144px;top:549px;width:5px;height:6px;background:rgb(242,242,246)"></div>
<div style="position:absolute;left:42px;top:598px;width:7px;height:7px;background:rgb(198,198,202)"></div>
<div style="position:absolute;left:49px;top:598px;width:7px;height:7px;background:rgb(185,185,189)"></div>
<div style="position:absolute;left:56px;top:598px;width:7px;height:7px;background:rgb(210,210,214)"></div>
<div style="position:absolute;left:63px;top:598px;width:7px;height:7px;background:rgb(200,200,204)"></div>
<div style="position:absolute;left:70px;top:598px;width:8px;height:7px;background:rgb(208,208,212)"></div>
<div style="position:absolute;left:78px;top:598px;width:7px;height:7px;background:rgb(222,222,226)"></div>
<div style="position:absolute;left:85px;top:598px;width:7px;height:7px;background:rgb(200,200,204)"></div>
<div style="position:absolute;left:92px;top:598px;width:7px;height:7px;background:rgb(192,192,196)"></div>
<div style="position:absolute;left:99px;top:598px;width:7px;height:7px;background:rgb(215,215,219)"></div>
<div style="position:absolute;left:42px;top:605px;width:7px;height:7px;background:rgb(200,200,204)"></div>
<div style="position:absolute;left:49px;top:605px;width:7px;height:7px;background:rgb(175,175,179)"></div>
<div style="position:absolute;left:56px;top:605px;width:7px;height:7px;background:rgb(158,158,162)"></div>
<div style="position:absolute;left:63px;top:605px;width:7px;height:7px;background:rgb(175,175,179)"></div>
<div style="position:absolute;left:70px;top:605px;width:8px;height:7px;background:rgb(195,195,199)"></div>
<div style="position:absolute;left:78px;top:605px;width:7px;height:7px;background:rgb(212,212,216)"></div>
<div style="position:absolute;left:85px;top:605px;width:7px;height:7px;background:rgb(205,205,209)"></div>
<div style="position:absolute;left:92px;top:605px;width:7px;height:7px;background:rgb(202,202,206)"></div>
<div style="position:absolute;left:99px;top:605px;width:7px;height:7px;background:rgb(205,205,209)"></div>
<div style="position:absolute;left:42px;top:595px;width:14px;height:3px;background:rgb(238,238,242)"></div>
<div style="position:absolute;left:85px;top:595px;width:14px;height:3px;background:rgb(236,236,240)"></div>
<div style="position:absolute;left:113px;top:598px;width:7px;height:7px;background:rgb(205,205,209)"></div>
<div style="position:absolute;left:120px;top:598px;width:7px;height:7px;background:rgb(165,165,169)"></div>
<div style="position:absolute;left:127px;top:598px;width:7px;height:7px;background:rgb(165,165,169)"></div>
<div style="position:absolute;left:134px;top:598px;width:7px;height:7px;background:rgb(168,168,172)"></div>
<div style="position:absolute;left:141px;top:598px;width:8px;height:7px;background:rgb(215,215,219)"></div>
<div style="position:absolute;left:113px;top:605px;width:7px;height:7px;background:rgb(200,200,204)"></div>
<div style="position:absolute;left:120px;top:605px;width:7px;height:7px;background:rgb(158,158,162)"></div>
<div style="position:absolute;left:127px;top:605px;width:7px;height:7px;background:rgb(158,158,162)"></div>
<div style="position:absolute;left:134px;top:605px;width:7px;height:7px;background:rgb(160,160,164)"></div>
<div style="position:absolute;left:141px;top:605px;width:8px;height:7px;background:rgb(185,185,189)"></div>
<div style="position:absolute;left:113px;top:595px;width:36px;height:3px;background:rgb(240,240,244)"></div>
<div style="position:absolute;left:38px;top:713px;width:7px;height:7px;background:rgb(240,240,244)"></div>
<div style="position:absolute;left:45px;top:713px;width:9px;height:7px;background:rgb(225,225,229)"></div>
<div style="position:absolute;left:54px;top:713px;width:9px;height:7px;background:rgb(246,246,250)"></div>
<div style="position:absolute;left:63px;top:713px;width:9px;height:7px;background:rgb(246,246,250)"></div>
<div style="position:absolute;left:72px;top:713px;width:9px;height:7px;background:rgb(246,246,250)"></div>
<div style="position:absolute;left:81px;top:713px;width:9px;height:7px;background:rgb(232,232,236)"></div>
<div style="position:absolute;left:90px;top:713px;width:9px;height:7px;background:rgb(228,228,232)"></div>
<div style="position:absolute;left:99px;top:713px;width:9px;height:7px;background:rgb(248,248,252)"></div>
<div style="position:absolute;left:108px;top:713px;width:9px;height:7px;background:rgb(248,248,252)"></div>
<div style="position:absolute;left:117px;top:713px;width:9px;height:7px;background:rgb(248,248,252)"></div>
<div style="position:absolute;left:126px;top:713px;width:9px;height:7px;background:rgb(248,248,252)"></div>
<div style="position:absolute;left:135px;top:713px;width:9px;height:7px;background:rgb(248,248,252)"></div>
<div style="position:absolute;left:144px;top:713px;width:9px;height:7px;background:rgb(244,244,248)"></div>
<div style="position:absolute;left:153px;top:713px;width:9px;height:7px;background:rgb(238,238,242)"></div>
<div style="position:absolute;left:162px;top:713px;width:9px;height:7px;background:rgb(244,244,248)"></div>
<div style="position:absolute;left:171px;top:713px;width:9px;height:7px;background:rgb(246,246,250)"></div>
<div style="position:absolute;left:180px;top:713px;width:9px;height:7px;background:rgb(246,246,250)"></div>
<div style="position:absolute;left:189px;top:713px;width:9px;height:7px;background:rgb(246,246,250)"></div>
<div style="position:absolute;left:198px;top:713px;width:9px;height:7px;background:rgb(244,244,248)"></div>
<div style="position:absolute;left:207px;top:713px;width:9px;height:7px;background:rgb(232,232,236)"></div>
<div style="position:absolute;left:216px;top:713px;width:9px;height:7px;background:rgb(232,232,236)"></div>
<div style="position:absolute;left:225px;top:713px;width:9px;height:7px;background:rgb(232,232,236)"></div>
<div style="position:absolute;left:234px;top:713px;width:9px;height:7px;background:rgb(232,232,236)"></div>
<div style="position:absolute;left:243px;top:713px;width:4px;height:7px;background:rgb(240,240,244)"></div>
<div style="position:absolute;left:38px;top:720px;width:7px;height:9px;background:rgb(232,232,236)"></div>
<div style="position:absolute;left:45px;top:720px;width:9px;height:9px;background:rgb(165,165,169)"></div>
<div style="position:absolute;left:54px;top:720px;width:9px;height:9px;background:rgb(158,158,162)"></div>
<div style="position:absolute;left:63px;top:720px;width:9px;height:9px;background:rgb(160,160,164)"></div>
<div style="position:absolute;left:72px;top:720px;width:9px;height:9px;background:rgb(185,185,189)"></div>
<div style="position:absolute;left:81px;top:720px;width:9px;height:9px;background:rgb(188,188,192)"></div>
<div style="position:absolute;left:90px;top:720px;width:9px;height:9px;background:rgb(168,168,172)"></div>
<div style="position:absolute;left:99px;top:720px;width:9px;height:9px;background:rgb(222,222,226)"></div>
<div style="position:absolute;left:108px;top:720px;width:9px;height:9px;background:rgb(225,225,229)"></div>
<div style="position:absolute;left:117px;top:720px;width:9px;height:9px;background:rgb(180,180,184)"></div>
<div style="position:absolute;left:126px;top:720px;width:9px;height:9px;background:rgb(158,158,162)"></div>
<div style="position:absolute;left:135px;top:720px;width:9px;height:9px;background:rgb(165,165,169)"></div>
<div style="position:absolute;left:144px;top:720px;width:9px;height:9px;background:rgb(205,205,209)"></div>
<div style="position:absolute;left:153px;top:720px;width:9px;height:9px;background:rgb(172,172,176)"></div>
<div style="position:absolute;left:162px;top:720px;width:9px;height:9px;background:rgb(175,175,179)"></div>
<div style="position:absolute;left:171px;top:720px;width:9px;height:9px;background:rgb(165,165,169)"></div>
<div style="position:absolute;left:180px;top:720px;width:9px;height:9px;background:rgb(150,150,154)"></div>
<div style="position:absolute;left:189px;top:720px;width:9px;height:9px;background:rgb(185,185,189)"></div>
<div style="position:absolute;left:198px;top:720px;width:9px;height:9px;background:rgb(200,200,204)"></div>
<div style="position:absolute;left:207px;top:720px;width:9px;height:9px;background:rgb(180,180,184)"></div>
<div style="position:absolute;left:216px;top:720px;width:9px;height:9px;background:rgb(165,165,169)"></div>
<div style="position:absolute;left:225px;top:720px;width:9px;height:9px;background:rgb(165,165,169)"></div>
<div style="position:absolute;left:234px;top:720px;width:9px;height:9px;background:rgb(172,172,176)"></div>
<div style="position:absolute;left:243px;top:720px;width:4px;height:9px;background:rgb(175,175,179)"></div>
<div style="position:absolute;left:38px;top:729px;width:7px;height:6px;background:rgb(242,242,246)"></div>
<div style="position:absolute;left:45px;top:729px;width:9px;height:6px;background:rgb(232,232,236)"></div>
<div style="position:absolute;left:54px;top:729px;width:9px;height:6px;background:rgb(228,228,232)"></div>
<div style="position:absolute;left:63px;top:729px;width:9px;height:6px;background:rgb(236,236,240)"></div>
<div style="position:absolute;left:72px;top:729px;width:9px;height:6px;background:rgb(242,242,246)"></div>
<div style="position:absolute;left:81px;top:729px;width:9px;height:6px;background:rgb(242,242,246)"></div>
<div style="position:absolute;left:90px;top:729px;width:9px;height:6px;background:rgb(238,238,242)"></div>
<div style="position:absolute;left:99px;top:729px;width:9px;height:6px;background:rgb(245,245,249)"></div>
<div style="position:absolute;left:108px;top:729px;width:9px;height:6px;background:rgb(246,246,250)"></div>
<div style="position:absolute;left:117px;top:729px;width:9px;height:6px;background:rgb(228,228,232)"></div>
<div style="position:absolute;left:126px;top:729px;width:9px;height:6px;background:rgb(230,230,234)"></div>
<div style="position:absolute;left:135px;top:729px;width:9px;height:6px;background:rgb(228,228,232)"></div>
<div style="position:absolute;left:144px;top:729px;width:9px;height:6px;background:rgb(242,242,246)"></div>
<div style="position:absolute;left:153px;top:729px;width:9px;height:6px;background:rgb(235,235,239)"></div>
<div style="position:absolute;left:162px;top:729px;width:9px;height:6px;background:rgb(240,240,244)"></div>
<div style="position:absolute;left:171px;top:729px;width:9px;height:6px;background:rgb(218,218,222)"></div>
<div style="position:absolute;left:180px;top:729px;width:9px;height:6px;background:rgb(218,218,222)"></div>
<div style="position:absolute;left:189px;top:729px;width:9px;height:6px;background:rgb(238,238,242)"></div>
<div style="position:absolute;left:198px;top:729px;width:9px;height:6px;background:rgb(246,246,250)"></div>
<div style="position:absolute;left:207px;top:729px;width:9px;height:6px;background:rgb(240,240,244)"></div>
<div style="position:absolute;left:216px;top:729px;width:9px;height:6px;background:rgb(232,232,236)"></div>
<div style="position:absolute;left:225px;top:729px;width:9px;height:6px;background:rgb(232,232,236)"></div>
<div style="position:absolute;left:234px;top:729px;width:9px;height:6px;background:rgb(236,236,240)"></div>
<div style="position:absolute;left:243px;top:729px;width:4px;height:6px;background:rgb(238,238,242)"></div>
<svg style="position:absolute;left:355px;top:784px" width="12" height="15" viewBox="0 0 12 15"><path d="M9.6 1.6 L3.6 7.5 L9.6 13.4" fill="none" stroke="#161820" stroke-width="3.3"/></svg>
<div style="position:absolute;left:373px;top:776px;width:32px;height:32px;box-sizing:border-box;border:1px solid #2866ba;border-radius:50%;background:#fff"></div>
<div class="t" style="left:373px;top:783.25px;font-size:15.3px;line-height:17.09px;color:#1d5db6;font-weight:normal;letter-spacing:0px;width:32px;text-align:center;-webkit-text-stroke:0.25px #1d5db6">1</div>
<div style="position:absolute;left:409px;top:776px;width:32px;height:32px;box-sizing:border-box;border:1px solid #2866ba;border-radius:50%;background:#fff"></div>
<div class="t" style="left:409px;top:783.25px;font-size:15.3px;line-height:17.09px;color:#1d5db6;font-weight:normal;letter-spacing:0px;width:32px;text-align:center;-webkit-text-stroke:0.25px #1d5db6">2</div>
<div style="position:absolute;left:445px;top:776px;width:32px;height:32px;box-sizing:border-box;border:1px solid #2866ba;border-radius:50%;background:#fff"></div>
<div class="t" style="left:445px;top:783.25px;font-size:15.3px;line-height:17.09px;color:#1d5db6;font-weight:normal;letter-spacing:0px;width:32px;text-align:center;-webkit-text-stroke:0.25px #1d5db6">3</div>
<div style="position:absolute;left:481px;top:776px;width:32px;height:32px;box-sizing:border-box;border-radius:50%;background:#0c5fc9"></div>
<div class="t" style="left:481px;top:783.25px;font-size:15.3px;line-height:17.09px;color:#fff;font-weight:normal;letter-spacing:0px;width:32px;text-align:center;-webkit-text-stroke:0.2px #fff">4</div>
<div style="position:absolute;left:517px;top:776px;width:32px;height:32px;box-sizing:border-box;border:1px solid #2866ba;border-radius:50%;background:#fff"></div>
<div class="t" style="left:517px;top:783.25px;font-size:15.3px;line-height:17.09px;color:#1d5db6;font-weight:normal;letter-spacing:0px;width:32px;text-align:center;-webkit-text-stroke:0.25px #1d5db6">5</div>
<div style="position:absolute;left:553px;top:776px;width:32px;height:32px;box-sizing:border-box;border:1px solid #2866ba;border-radius:50%;background:#fff"></div>
<div class="t" style="left:553px;top:783.25px;font-size:15.3px;line-height:17.09px;color:#1d5db6;font-weight:normal;letter-spacing:0px;width:32px;text-align:center;-webkit-text-stroke:0.25px #1d5db6">6</div>
<div style="position:absolute;left:589px;top:776px;width:32px;height:32px;box-sizing:border-box;border:1px solid #2866ba;border-radius:50%;background:#fff"></div>
<div class="t" style="left:589px;top:783.25px;font-size:15.3px;line-height:17.09px;color:#1d5db6;font-weight:normal;letter-spacing:0px;width:32px;text-align:center;-webkit-text-stroke:0.25px #1d5db6">7</div>
<div style="position:absolute;left:625px;top:776px;width:32px;height:32px;box-sizing:border-box;border:1px solid #2866ba;border-radius:50%;background:#fff"></div>
<div class="t" style="left:625px;top:783.25px;font-size:15.3px;line-height:17.09px;color:#1d5db6;font-weight:normal;letter-spacing:0px;width:32px;text-align:center;-webkit-text-stroke:0.25px #1d5db6">8</div>
<div style="position:absolute;left:661px;top:776px;width:32px;height:32px;box-sizing:border-box;border:1px solid #2866ba;border-radius:50%;background:#fff"></div>
<div class="t" style="left:661px;top:783.25px;font-size:15.3px;line-height:17.09px;color:#1d5db6;font-weight:normal;letter-spacing:0px;width:32px;text-align:center;-webkit-text-stroke:0.25px #1d5db6">9</div>
<div style="position:absolute;left:697px;top:776px;width:32px;height:32px;box-sizing:border-box;border:1px solid #2866ba;border-radius:50%;background:#fff"></div>
<div class="t" style="left:697px;top:783.25px;font-size:15.3px;line-height:17.09px;color:#1d5db6;font-weight:normal;letter-spacing:0px;width:32px;text-align:center;-webkit-text-stroke:0.25px #1d5db6">10</div>
<div style="position:absolute;left:733px;top:776px;width:32px;height:32px;box-sizing:border-box;border:1px solid #2866ba;border-radius:50%;background:#fff"></div>
<div class="t" style="left:733px;top:783.25px;font-size:15.3px;line-height:17.09px;color:#1d5db6;font-weight:normal;letter-spacing:0px;width:32px;text-align:center;-webkit-text-stroke:0.25px #1d5db6">11</div>
<svg style="position:absolute;left:770px;top:784px" width="12" height="15" viewBox="0 0 12 15"><path d="M2.6 1.6 L8.6 7.5 L2.6 13.4" fill="none" stroke="#161820" stroke-width="3.3"/></svg>
</body></html>
